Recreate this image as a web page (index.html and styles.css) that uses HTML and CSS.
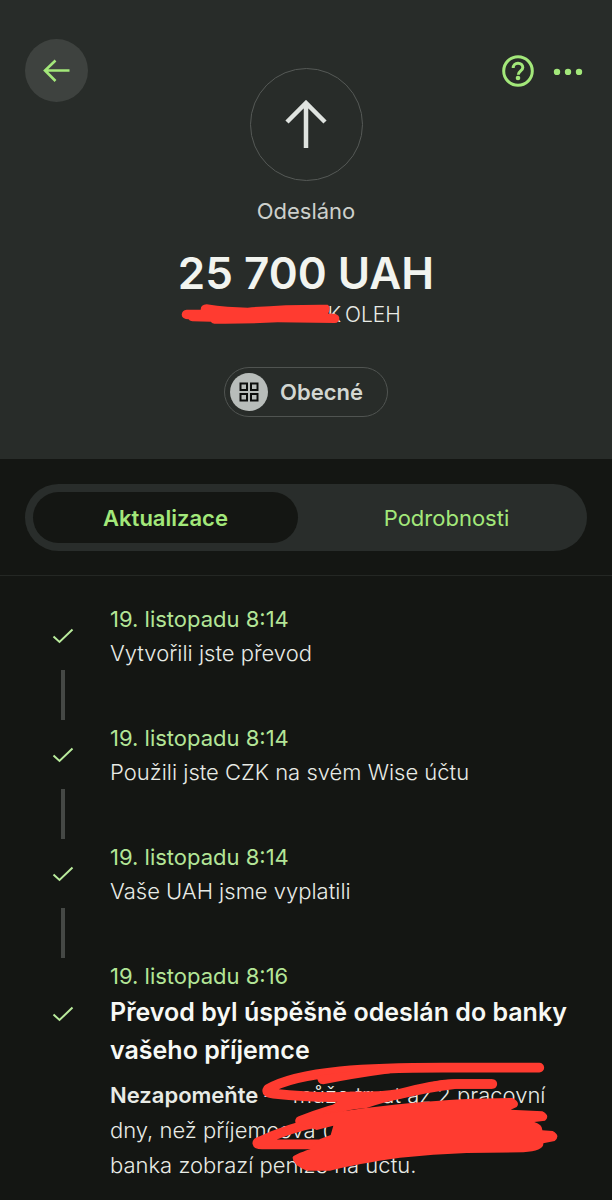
FILE: index.html
```html
<!DOCTYPE html>
<html lang="cs">
<head>
<meta charset="utf-8">
<meta name="viewport" content="width=device-width, initial-scale=1">
<title>Odesláno – 25 700 UAH</title>
<link rel="stylesheet" href="styles.css">
</head>
<body>
<header class="hero">
  <div class="topbar">
    <button class="back" type="button" aria-label="Zpět">
      <svg width="28" height="24" viewBox="0 0 28 24" fill="none" stroke="currentColor" stroke-width="2.6"><path d="M26.500 11.500H2M12.500 1.500 2 11.500l10.500 10.500"/></svg>
    </button>
    <div class="direction">
      <svg width="42" height="50" viewBox="0 0 42 50" fill="none" stroke="currentColor" stroke-width="4.500"><path d="M21 48V4M2 22 21 3l19 19"/></svg>
    </div>
    <div class="actions">
      <button class="icon-button" type="button" aria-label="Nápověda">
        <svg width="32" height="32" viewBox="0 0 32 32" fill="none" stroke="currentColor" stroke-width="3"><circle cx="16" cy="16" r="14.3"/><path d="M11.2 13c0-3 2-4.800 4.800-4.800s4.800 1.700 4.800 4.300c0 3.300-4.500 3.500-4.500 7.300"/><circle cx="16" cy="23" r="2.300" fill="currentColor" stroke="none"/></svg>
      </button>
      <button class="icon-button more" type="button" aria-label="Další možnosti">
        <svg width="30" height="8" viewBox="0 0 30 8" fill="currentColor"><circle cx="4" cy="5" r="3.200"/><circle cx="15" cy="5" r="3.200"/><circle cx="26" cy="5" r="3.200"/></svg>
      </button>
    </div>
  </div>
  <p class="status">Odesláno</p>
  <h1 class="amount">25 700 UAH</h1>
  <p class="recipient">
    <span class="hidden-name">K
      <svg class="name-scribble" width="160" height="20" viewBox="40 25 480 60" aria-hidden="true"><path fill="#ff3b30" d="M57 42H99Q99 27 117 26Q180 36 240 36Q350 26 480 27Q490 33 484 48L481 54Q512 52 515 66Q515 81 501 82L330 80Q240 85 140 84Q131 83 130 78L74 77Q64 76 63 71Q43 70 42 57Q43 43 57 42Z"/></svg>
    </span>
    <span>OLEH</span>
  </p>
  <button class="category" type="button">
    <span class="category-icon">
      <svg width="20" height="20" viewBox="0 0 20 20" fill="none" stroke="currentColor" stroke-width="2"><path d="M1.500 1.500h6.500v6.500H1.500zM12 1.500h6.500v6.500H12zM1.500 12h6.500v6.500H1.500zM12 12h6.500v6.500H12z"/></svg>
    </span>
    Obecné
  </button>
</header>

<main>
  <div class="tab-area">
    <div class="tabs" role="tablist">
      <button class="tab tab-active" type="button" role="tab" aria-selected="true">Aktualizace</button>
      <button class="tab" type="button" role="tab" aria-selected="false">Podrobnosti</button>
    </div>
  </div>

  <ol class="timeline">
    <li class="step">
      <svg class="check" width="22" height="16" viewBox="0 0 22 16"><path d="M1.500 8.500 7.500 14 20.500 1.500"/></svg>
      <div><time class="date">19. listopadu 8:14</time><p class="event">Vytvořili jste převod</p></div>
      <span class="connector"></span>
    </li>
    <li class="step">
      <svg class="check" width="22" height="16" viewBox="0 0 22 16"><path d="M1.500 8.500 7.500 14 20.500 1.500"/></svg>
      <div><time class="date">19. listopadu 8:14</time><p class="event">Použili jste CZK na svém Wise účtu</p></div>
      <span class="connector"></span>
    </li>
    <li class="step">
      <svg class="check" width="22" height="16" viewBox="0 0 22 16"><path d="M1.500 8.500 7.500 14 20.500 1.500"/></svg>
      <div><time class="date">19. listopadu 8:14</time><p class="event">Vaše UAH jsme vyplatili</p></div>
      <span class="connector"></span>
    </li>
    <li class="step">
      <svg class="check" width="22" height="16" viewBox="0 0 22 16"><path d="M1.500 8.500 7.500 14 20.500 1.500"/></svg>
      <div><time class="date">19. listopadu 8:16</time><h2 class="result">Převod byl úspěšně odeslán do banky vašeho příjemce</h2></div>
      <div class="detail">
        <p><strong>Nezapomeňte</strong> — může trvat až 2 pracovní<br>dny, než příjemcova (<br>banka zobrazí peníze na účtu.</p>
        <svg class="detail-scribble" width="340" height="150" viewBox="0 0 1020 450" aria-hidden="true">
          <g fill="none" stroke="#ff3b30" stroke-width="29" stroke-linecap="round" stroke-linejoin="round">
            <path d="M898 56H640Q430 55 300 67Q150 82 84 120Q76 132 100 134Q230 148 330 143Q420 144 480 134Q580 107 640 105H757"/>
            <path d="M370 158Q260 183 180 216"/>
            <path d="M240 219Q150 235 53 280Q48 286 66 286H250"/>
          </g>
          <path fill="#ff3b30" d="M231 80Q230 104 250 106Q340 88 450 73L430 55ZM330 128H440Q520 115 560 104Q600 92 650 91H757V119H650Q560 130 490 148Q430 160 380 177L250 190Z"/>
          <path fill="#ff3b30" d="M172 206L370 178Q560 154 700 149L818 147Q842 160 830 174L812 182L907 187Q932 200 915 215L883 219Q908 227 907 244L938 246Q963 260 944 276L910 283Q912 306 850 310L680 312Q580 315 480 326Q350 344 270 365H200Q156 346 158 325Q160 317 212 300L240 270L272 258L280 230L230 243L214 236L180 226Z"/>
        </svg>
      </div>
    </li>
  </ol>
</main>
</body>
</html>
```
FILE: styles.css
```css
* {
  box-sizing: border-box;
}

body {
  margin: 0;
  min-height: 100vh;
  background: #141613;
  color: #e8ebe6;
  font: 22px/34px Inter, "Noto Sans", sans-serif;
}

h1, h2, p, ol {
  margin: 0;
  padding: 0;
}

button {
  border: 0;
  padding: 0;
  background: none;
  color: #a3e87a;
  font: inherit;
  cursor: pointer;
}

svg {
  display: block;
}

.hero {
  display: flex;
  flex-direction: column;
  align-items: center;
  padding: 39px 25px 42px;
  background: #282c29;
}

.topbar {
  display: grid;
  grid-template-columns: 1fr 113px 1fr;
  align-items: start;
  align-self: stretch;
}

.back {
  display: grid;
  place-items: center;
  width: 63px;
  height: 63px;
  border-radius: 50%;
  background: #3e423f;
}

.direction {
  display: grid;
  place-items: center;
  height: 113px;
  margin-top: 29px;
  border: 1px solid #555956;
  border-radius: 50%;
  color: #dfe3df;
}

.actions {
  display: flex;
  justify-content: flex-end;
  align-items: center;
  gap: 15px;
  height: 63px;
}

.icon-button {
  display: grid;
  place-items: center;
  width: 32px;
  height: 32px;
}

.more {
  width: 38px;
}

.status {
  margin-top: 15px;
  line-height: 30px;
  color: #cdd0cc;
}

.amount {
  margin-top: 21px;
  color: #f2f4ef;
  font-size: 44px;
  font-weight: 600;
  line-height: 52px;
}

.recipient {
  display: flex;
  gap: 4px;
  margin-top: 1px;
  font-size: 21px;
  font-weight: 300;
  line-height: 30px;
}

.hidden-name {
  position: relative;
  width: 130px;
  text-align: right;
}

.name-scribble {
  position: absolute;
  right: 0;
  top: 4px;
}

.category {
  display: flex;
  align-items: center;
  gap: 12px;
  height: 50px;
  margin-top: 37px;
  padding: 0 24px 0 5px;
  border: 1px solid #505451;
  border-radius: 25px;
  color: #d3d7d2;
  font-weight: 600;
}

.category-icon {
  display: grid;
  place-items: center;
  width: 38px;
  height: 38px;
  border-radius: 50%;
  background: #b8bdba;
  color: #0c0e0c;
}

.tab-area {
  padding: 25px 25px 24px;
  border-bottom: 1px solid #242724;
}

.tabs {
  display: flex;
  gap: 16px;
  padding: 8px;
  border-radius: 34px;
  background: #292d2b;
}

.tab {
  flex: 1;
  height: 51px;
  border-radius: 26px;
}

.tab-active {
  background: #141613;
  font-weight: 600;
}

.timeline {
  padding: 26px 25px 14px;
  list-style: none;
}

.step {
  display: grid;
  grid-template-columns: 75px 1fr;
  column-gap: 10px;
}

.check {
  place-self: center;
  fill: none;
  stroke: #b9eb9c;
  stroke-width: 2;
}

.date {
  display: block;
  color: #b3e597;
}

.event {
  font-weight: 300;
}

.connector {
  justify-self: center;
  width: 4px;
  height: 50px;
  margin-bottom: 1px;
  background: #454845;
}

.result {
  color: #f7f9f5;
  font-size: 25px;
  font-weight: 600;
  line-height: 38px;
}

.detail {
  position: relative;
  grid-column: 2;
  margin-top: 9px;
  font-weight: 300;
  line-height: 35px;
}

.detail strong {
  font-weight: 600;
}

.detail-scribble {
  position: absolute;
  left: 130px;
  top: -29px;
}
```
